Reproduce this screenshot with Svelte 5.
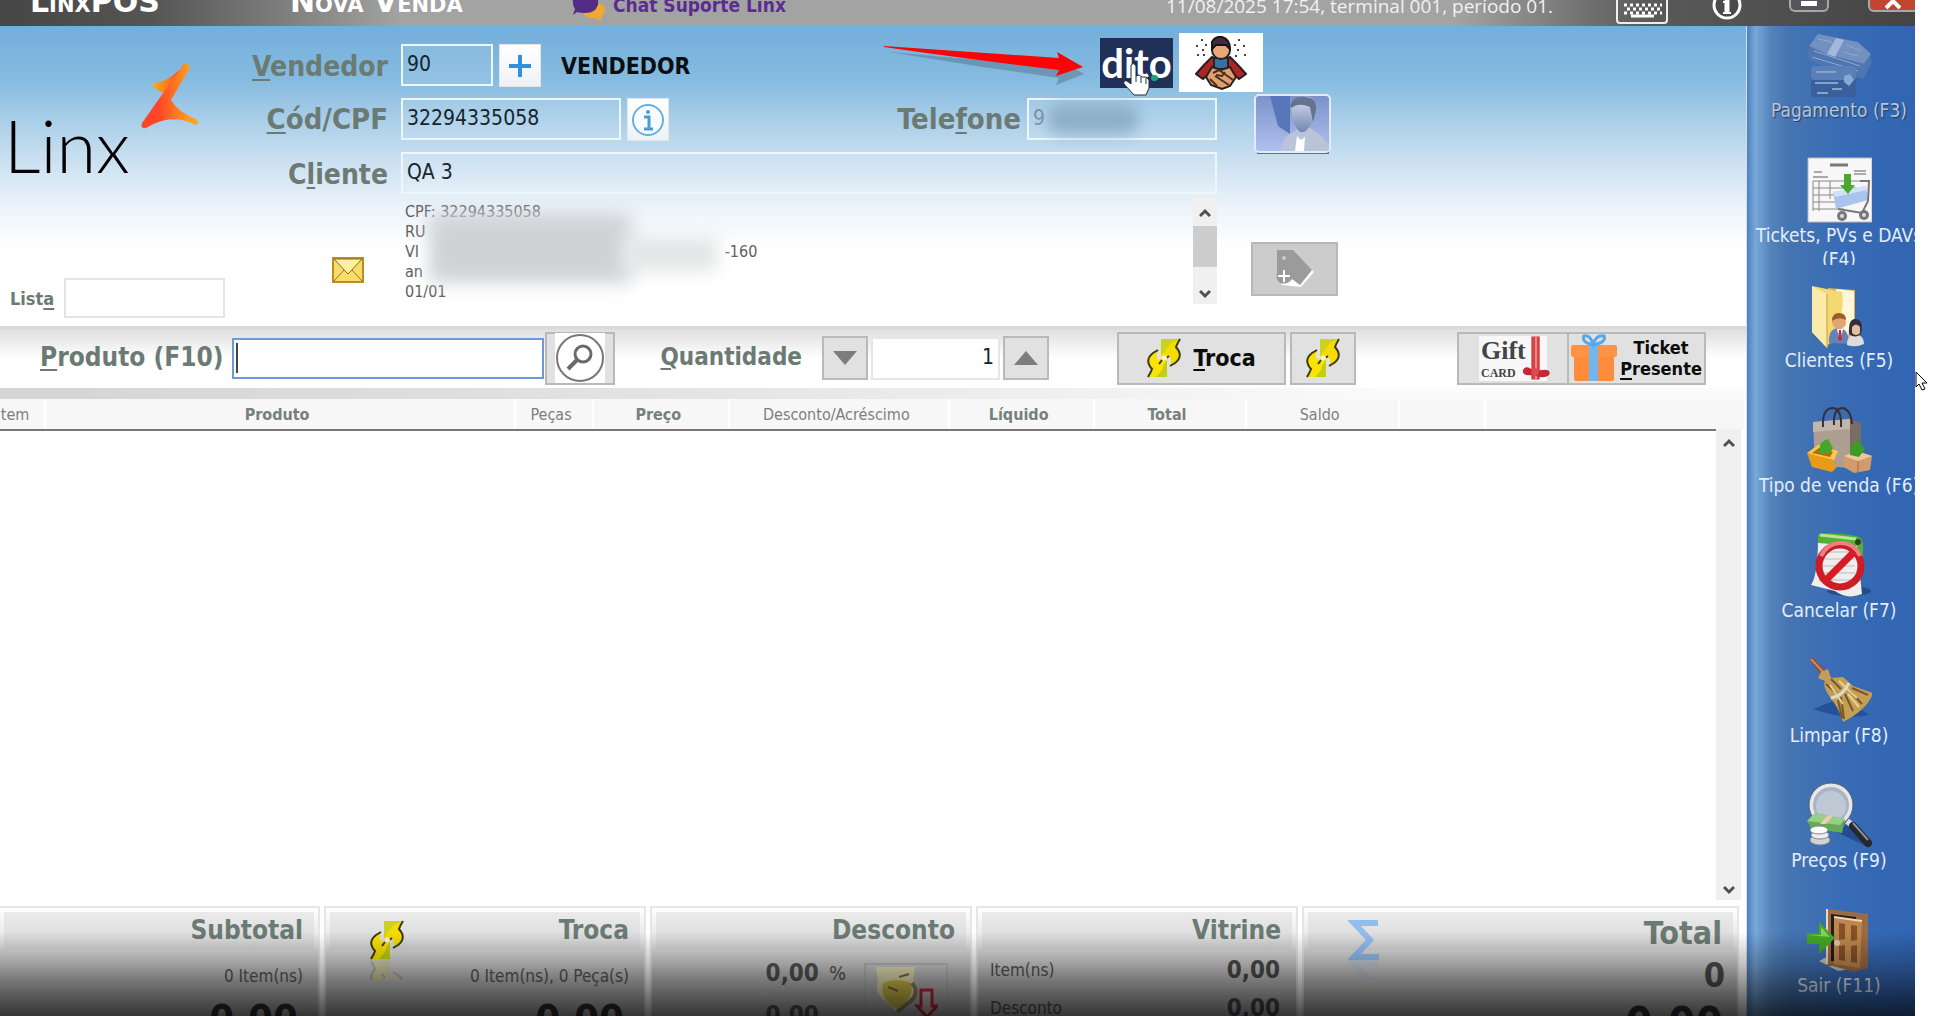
<script>
  let vendedor = $state('90');
  let codigo = $state('32294335058');
  let cliente = $state('QA 3');
  let telefone = $state('9');
  let lista = $state('');
  let produto = $state('');
  let quantidade = $state('1');

  const columns = [
    { name: 'Item', width: 2.6, bold: false },
    { name: 'Produto', width: 26.9, bold: true },
    { name: 'Peças', width: 4.5, bold: false },
    { name: 'Preço', width: 7.8, bold: true },
    { name: 'Desconto/Acréscimo', width: 12.6, bold: false },
    { name: 'Líquido', width: 8.3, bold: true },
    { name: 'Total', width: 8.7, bold: true },
    { name: 'Saldo', width: 8.8, bold: false },
    { name: '', width: 4.9, bold: false },
    { name: '', width: 14.9, bold: false }
  ];

  const actions = [
    { label: 'Pagamento (F3)', icon: 'pay', disabled: true },
    { label: 'Tickets, PVs e DAVs (F4)', icon: 'tickets' },
    { label: 'Clientes (F5)', icon: 'clients' },
    { label: 'Tipo de venda (F6)', icon: 'saletype' },
    { label: 'Cancelar (F7)', icon: 'cancel' },
    { label: 'Limpar (F8)', icon: 'broom' },
    { label: 'Preços (F9)', icon: 'prices' },
    { label: 'Sair (F11)', icon: 'exit' }
  ];
</script>

{#snippet swap()}
  <svg class="swap" viewBox="0 0 34 40" aria-hidden="true">
    <path d="M14 1H33Q30 6 29 9Q37 18 28 25L23 28Q26 22 22 18L15 23L14 22Z" fill="#f6dc00" />
    <path d="M14 1H33L24 5L17 14L14 17Z" fill="#cdd21c" />
    <path d="M33 1Q30 6 29 9Q37 18 28 25L23 28M22 18L15 23" fill="none" stroke="#3c3a10" stroke-width="2" />
    <path d="M20 39H1Q4 34 5 31Q-3 22 6 15L11 12Q8 18 12 22L19 17L20 18Z" fill="#fae300" />
    <path d="M20 39H9L15 32L17 26L20 22Z" fill="#c3cf14" />
    <path d="M1 39Q4 34 5 31Q-3 22 6 15L11 12M12 26L15 22" fill="none" stroke="#3c3a10" stroke-width="2" />
    <path d="M14 19L18 17L20 21L16 23Z" fill="#f4f4ee" />
  </svg>
{/snippet}

{#snippet sigma()}
  <svg width="32" height="40" viewBox="0 0 32 40" aria-hidden="true">
    <path d="M30 3H6L22 20L6 37H31" fill="none" stroke="#93bdf0" stroke-width="6" />
  </svg>
{/snippet}

{#snippet chevron(down)}
  <svg width="12" height="10" viewBox="0 0 12 10" aria-hidden="true">
    <path d={down ? 'M1 2L6 7L11 2' : 'M1 8L6 3L11 8'} fill="none" stroke="#505050" stroke-width="3" />
  </svg>
{/snippet}

{#snippet actionIcon(name)}
  <svg class="action-icon" viewBox="0 0 66 66" aria-hidden="true">
    {#if name === 'pay'}
      <path d="M12 8L52 18L66 30L57 47L14 33L1 26Z" fill="#5078b2" />
      <path d="M12 2L52 10L65 22L58 32L20 22L3 14Z" fill="#7391c0" />
      <path d="M3 14L20 22L58 32L65 22L64 34L57 46L14 33L1 26Z" fill="#4f76b0" />
      <path d="M30 6L38 8L29 25L21 22Z" fill="#a3b9db" />
      <path d="M12 7L26 10M40 13L56 19M38 20L52 24M8 19L54 34M6 25L52 39" stroke="#8eaad1" stroke-width="1" />
      <rect x="5" y="34" width="45" height="31" rx="3" fill="#3b5f9b" />
      <rect x="5" y="34" width="45" height="14" rx="3" fill="#5b80b7" />
      <path d="M10 40H30M9 51H32M26 57H36M11 61H22" stroke="#86a3ce" stroke-width="2" />
      <path d="M38 44L44 42L48 48L43 54L38 50Z" fill="#8aa8d4" />
    {:else if name === 'tickets'}
      <path d="M2 1H66V65H2Z" fill="#f7f7f7" stroke="#bbb" />
      <path d="M24 8H42" stroke="#777" stroke-width="3" />
      <path d="M8 15H16M7 20H22M48 14H60M48 17H60" stroke="#aaa" stroke-width="2" />
      <path d="M7 24H62M7 31H50M7 38H45M7 45H36M7 52H38M7 24V54M13 24V54M24 24V42" stroke="#888" stroke-width="1" />
      <path d="M27 35L60 29L62 43L30 52Z" fill="#a9c4ee" />
      <path d="M27 35L60 29L61 33L29 40Z" fill="#d3e2fa" />
      <path d="M54 24H63L62 44L56 56L32 52" fill="none" stroke="#777" stroke-width="2" />
      <path d="M38 17H45V28H49L42 37L34 28H38Z" fill="#4aa82c" />
      <circle cx="36" cy="59" r="5" fill="#777" /><circle cx="58" cy="58" r="5" fill="#777" />
      <circle cx="36" cy="59" r="2" fill="#ddd" /><circle cx="58" cy="58" r="2" fill="#ddd" />
    {:else if name === 'clients'}
      <path d="M22 6L49 8V56L22 62Z" fill="#d9b341" />
      <path d="M30 7L48 9V50L30 58Z" fill="#fff7d8" />
      <path d="M6 4L36 10Q39 30 30 44L21 66L6 50Z" fill="#f4d872" />
      <path d="M6 4L21 12V66L6 50Z" fill="#f9eba9" />
      <path d="M21 12V66" stroke="#c39c31" stroke-width="1" />
      <path d="M23 61Q22 47 32 46Q43 46 43 62Z" fill="#6382b7" />
      <path d="M31 47L34 61L37 47Z" fill="#fff" /><path d="M33 48H35L36 57L34 60L32 57Z" fill="#b9303a" />
      <circle cx="33" cy="40" r="7" fill="#e4a66e" /><path d="M26 39Q26 31 33 31Q40 31 40 38Q33 34 26 39Z" fill="#9b5d25" />
      <path d="M41 63Q41 53 49 52Q58 53 58 62Q49 66 41 63Z" fill="#ddd" />
      <path d="M43 52Q42 36 50 37Q58 38 55 52Q49 57 43 52Z" fill="#30313c" />
      <path d="M46 45Q50 40 54 45V51Q50 55 46 51Z" fill="#e7be9b" />
    {:else if name === 'saletype'}
      <path d="M7 15L44 12V61L9 58Z" fill="#ae9e92" />
      <path d="M44 12L55 16V58L44 61Z" fill="#796c64" />
      <path d="M7 15L44 12V22L7 25Z" fill="#c2b5aa" />
      <path d="M17 20Q16 1 27 1Q36 2 35 20M28 18Q27 1 37 1Q45 3 46 17" fill="none" stroke="#382f35" stroke-width="2" />
      <path d="M1 46L24 50L31 60L26 65L6 60Z" fill="#e89b18" />
      <path d="M1 46L12 38L32 44L28 53Z" fill="#ffc843" />
      <path d="M6 46L13 41L27 45L24 50Z" fill="#b86a0e" />
      <path d="M38 49L49 43L66 49L64 63L48 66L38 60Z" fill="#d19b6c" />
      <path d="M38 49L52 54L66 49L50 44Z" fill="#efc59f" />
      <path d="M52 54V65" stroke="#a26c40" stroke-width="1" />
      <path d="M13 44Q14 33 22 32L27 41L24 47H14Z" fill="#46a629" />
      <path d="M44 48Q43 37 52 33L59 42L53 50Z" fill="#3c9c26" />
    {:else if name === 'cancel'}
      <ellipse cx="43" cy="59" rx="22" ry="5" fill="#1c3f7b" opacity="0.7" />
      <path d="M12 6H50L56 62Q41 68 29 59L5 53Q12 43 12 6Z" fill="#eee" />
      <path d="M15 20H48M15 27H49M15 34H49M14 41H49M13 48H50" stroke="#bbb" />
      <path d="M12 2Q30 0 50 4Q58 5 57 18V42L54 43L51 14L12 11Z" fill="#55af37" />
      <path d="M14 3L50 7" stroke="#b7e691" stroke-width="3" /><circle cx="52" cy="10" r="3" fill="#26451e" />
      <circle cx="34" cy="34" r="21" fill="none" stroke="#ce1c26" stroke-width="7" />
      <path d="M20 48L48 20" stroke="#d61d26" stroke-width="7" />
      <path d="M15 24Q22 10 36 11Q49 12 54 24" fill="none" stroke="#ec8082" stroke-width="4" />
    {:else if name === 'broom'}
      <path d="M7 52Q37 63 63 58L38 40Z" fill="#24529a" />
      <path d="M3 2L7 0L22 16L17 21Z" fill="#8b513d" /><path d="M5 2L19 17" stroke="#c28d70" stroke-width="2" />
      <path d="M15 15L22 12L25 21L37 20L47 29L67 36Q62 52 37 65Q32 49 25 42Q16 29 19 24L12 21Z" fill="#c49e55" />
      <path d="M25 22L35 32M20 27L31 37M46 31L62 38M43 33L56 47M39 37L47 54M35 40L38 62M32 43L36 61" stroke="#79572a" stroke-width="2" />
      <path d="M24 28L37 47M33 24L51 41M42 37L53 50" stroke="#ecd18e" stroke-width="2" />
      <path d="M25 41Q37 39 43 26" fill="none" stroke="#d9d9cc" stroke-width="3" />
    {:else if name === 'prices'}
      <path d="M30 50L60 64L65 61L40 43Z" fill="#244d8f" />
      <circle cx="25" cy="23" r="20" fill="#a9b5c6" stroke="#e5e7ea" stroke-width="4" />
      <circle cx="25" cy="23" r="22" fill="none" stroke="#5b6168" stroke-width="1" />
      <circle cx="25" cy="24" r="15" fill="#c9d1dc" opacity="0.7" />
      <path d="M41 39L47 44" stroke="#ddd" stroke-width="6" />
      <path d="M47 44L62 61" stroke="#26282b" stroke-width="8" stroke-linecap="round" />
      <path d="M47 41L62 58" stroke="#89909a" stroke-width="2" />
      <path d="M1 39L9 31L39 37L36 51L5 46Z" fill="#66aa58" />
      <path d="M1 39L9 31L39 37L34 43Z" fill="#98cf86" />
      <path d="M22 33L27 34L20 42H14Z" fill="#edcdb1" />
      <ellipse cx="14" cy="58" rx="10" ry="5" fill="#d1d3d5" stroke="#83898e" />
      <ellipse cx="14" cy="53" rx="9" ry="4" fill="#edeeee" stroke="#83898e" />
      <ellipse cx="13" cy="48" rx="9" ry="4" fill="#fff" stroke="#83898e" />
    {:else}
      <path d="M13 54L25 48L45 62L32 64Z" fill="#c2c4c9" />
      <path d="M21 2L62 7V61L48 65L27 59H21Z" fill="#9b6b45" />
      <path d="M25 7L50 10V56L25 54Z" fill="#241b1c" />
      <path d="M28 10L56 14L54 61L28 57Z" fill="#bc864e" />
      <path d="M28 10L56 14M21 2V57" stroke="#efd8b9" stroke-width="2" fill="none" />
      <path d="M33 16L39 17V32L33 33ZM45 18L51 19V33L45 34ZM33 39L39 38V54L33 53ZM45 39L51 38V56L45 55Z" fill="#875025" />
      <circle cx="31" cy="36" r="3" fill="#dbc8a5" />
      <path d="M1 26H13V15L29 31L13 47V37H1Z" fill="#43a823" /><path d="M2 28H15V20L24 30Z" fill="#86cf63" />
    {/if}
  </svg>
{/snippet}

<div class="app">
  <header class="titlebar">
    <strong class="brand">LinxPOS</strong>
    <h1>Nova Venda</h1>
    <a class="chat" href="#chat">
      <svg width="34" height="28" viewBox="0 0 34 28" aria-hidden="true">
        <path d="M22 10Q33 10 33 17Q33 21 29 23L30 28L23 25Q15 26 12 21Z" fill="#f0a833" />
        <path d="M14 0H22Q27 4 26 12Q23 20 14 20Q8 20 5 19L1 22L3 16Q0 12 1 5Z" fill="#532d85" />
      </svg>
      <span>Chat Suporte Linx</span>
    </a>
    <span class="status">11/08/2025 17:54, terminal 001, período 01.</span>
    <button class="keyboard" aria-label="Teclado">
      <svg width="52" height="26" viewBox="0 0 52 26">
        <rect x="1" y="-3" width="50" height="26" rx="3" fill="none" stroke="#eee" stroke-width="2" />
        <path d="M8 5H46M11 9H46M8 13H46" stroke="#fff" stroke-width="3" stroke-dasharray="3 3" />
        <path d="M15 16H38" stroke="#fff" stroke-width="3" />
      </svg>
    </button>
    <button class="about" aria-label="Informações">
      <svg width="32" height="26" viewBox="0 0 32 26">
        <circle cx="16" cy="5" r="13" fill="#4b4b4b" stroke="#fff" stroke-width="3" />
        <path d="M16 0V14" stroke="#fff" stroke-width="5" /><path d="M12 2H16M12 13H20" stroke="#fff" stroke-width="2" />
      </svg>
    </button>
    <button class="window minimize" aria-label="Minimizar"><i></i></button>
    <button class="window close" aria-label="Fechar">
      <svg width="20" height="10" viewBox="0 0 20 10"><path d="M3 8L10 1L17 8" fill="none" stroke="#fff" stroke-width="4" /></svg>
    </button>
  </header>

  <div class="body">
    <main>
      <section class="sale-header">
        <div class="left">
          <div class="logo">
            <span>Linx</span>
            <svg width="60" height="68" viewBox="0 0 60 68" aria-hidden="true">
              <defs>
                <linearGradient id="flame" x1="0" x2="1"><stop offset="0.3" stop-color="#ff4527" /><stop offset="0.9" stop-color="#ffa51e" /></linearGradient>
                <linearGradient id="ember" x1="0" x2="1"><stop offset="0" stop-color="#ffae17" /><stop offset="1" stop-color="#f75220" /></linearGradient>
              </defs>
              <path d="M13 24Q11 21 16 21Q28 19 39 8L31 35Q19 30 13 24Z" fill="url(#ember)" />
              <path d="M43 3Q46 0 49 3Q50 5 48 9L31 38Q38 50 56 57Q60 61 56 63Q31 50 6 66Q0 67 2 61Z" fill="url(#flame)" />
            </svg>
          </div>
          <label class="lista"><span>List<u>a</u></span><input bind:value={lista} /></label>
        </div>

        <div class="form">
          <div class="row">
            <label class="caption" for="vendedor"><u>V</u>endedor</label>
            <div class="fields seller">
              <input id="vendedor" bind:value={vendedor} />
              <button class="square" aria-label="Adicionar vendedor">
                <svg width="24" height="24" viewBox="0 0 24 24"><path d="M12 1V23M1 12H23" stroke="#3190dc" stroke-width="4" /></svg>
              </button>
              <strong>VENDEDOR</strong>
            </div>
            <button class="dito">
              <span>dito</span><i></i>
            </button>
            <button class="deal" aria-label="Negociação">
              <svg width="52" height="54" viewBox="0 0 52 54">
                <path d="M6 4H8M10 9H12M1 10H3M7 14H9M2 19H4M8 19H10M43 4H45M39 9H41M48 10H50M42 14H44M49 19H51M40 20H42" stroke="#444" stroke-width="2" />
                <path d="M17 21L26 25L35 21L42 28L51 38L44 43L35 35H17L8 43L1 38L9 29Z" fill="#ae2523" stroke="#222" stroke-width="2" />
                <path d="M19 22H33V33H19Z" fill="#3472a3" stroke="#222" stroke-width="2" />
                <circle cx="26" cy="14" r="9" fill="#e9a878" stroke="#28212c" stroke-width="2" />
                <path d="M17 13V6Q20 0 27 1Q35 3 35 13L31 9H21Z" fill="#452d37" stroke="#17131b" stroke-width="2" />
                <path d="M17 31L26 34L35 31L41 41L35 50L27 53L16 49L11 41Z" fill="#dfa070" stroke="#2b2119" stroke-width="2" />
                <path d="M18 37L24 34L38 44M20 40L34 49M15 43L22 50M21 39L27 40L30 36" fill="none" stroke="#4e3021" stroke-width="2" />
              </svg>
            </button>
          </div>

          <div class="row">
            <label class="caption wide-caption" for="codigo"><u>C</u>ód/CPF</label>
            <div class="fields">
              <input id="codigo" bind:value={codigo} />
              <button class="square" aria-label="Dados do cliente">
                <svg width="34" height="34" viewBox="0 0 34 34"><circle cx="17" cy="17" r="15" fill="#f7fbfe" stroke="#6ab0df" stroke-width="2" /><path d="M13 14H18V26M13 26H22" fill="none" stroke="#499cd6" stroke-width="3" /><circle cx="17" cy="9" r="2" fill="#499cd6" /></svg>
              </button>
              <label class="caption wide-caption phone" for="telefone">Tele<u>f</u>one</label>
              <span class="masked"><input id="telefone" bind:value={telefone} /><i></i></span>
            </div>
            <button class="photo" aria-label="Foto do cliente">
              <svg viewBox="0 0 78 60">
                <defs>
                  <linearGradient id="sky" x1="0" x2="0" y1="0" y2="1"><stop offset="0" stop-color="#7c92c7" /><stop offset="1" stop-color="#afc0ee" /></linearGradient>
                  <linearGradient id="skin" x1="0" x2="0" y1="0" y2="1"><stop offset="0" stop-color="#d9dfef" /><stop offset="1" stop-color="#7386b4" /></linearGradient>
                </defs>
                <path d="M3 59H75" stroke="#5470a8" stroke-width="2" />
                <rect x="1" y="1" width="75" height="57" rx="4" fill="url(#sky)" stroke="#e4eafb" stroke-width="2" />
                <path d="M16 2H36V40L24 32Z" fill="#5876ba" />
                <path d="M27 57Q28 42 40 38L45 33H55L60 37Q72 42 75 57Z" fill="#bbc3d9" />
                <path d="M41 57L43 42L47 46L51 43L50 57Z" fill="#fff" />
                <path d="M37 11Q44 1 55 3Q63 6 60 22Q57 34 50 38H46Q38 32 37 11Z" fill="url(#skin)" />
                <path d="M36 12Q38 2 50 3Q63 3 62 16L59 28L56 13Q44 8 38 14Z" fill="#66728e" />
              </svg>
            </button>
          </div>

          <div class="row">
            <label class="caption" for="cliente">C<u>l</u>iente</label>
            <div class="fields"><input id="cliente" bind:value={cliente} /></div>
          </div>

          <div class="row details">
            <button class="mail" aria-label="Enviar e-mail">
              <svg width="32" height="26" viewBox="0 0 32 26">
                <rect x="1" y="1" width="30" height="24" fill="#f8dc6c" stroke="#bd8d20" stroke-width="2" />
                <path d="M2 2L16 17L30 2Z" fill="#fdf0a3" stroke="#8f6a16" /><path d="M2 24L12 13M30 24L20 13" stroke="#9b7118" />
              </svg>
            </button>
            <div class="memo">
              <div class="lines">
                <p>CPF: 32294335058</p>
                <p>RU</p>
                <p>VI <span>-160</span></p>
                <p>an</p>
                <p>01/01</p>
                <i class="veil wide"></i><i class="veil narrow"></i>
              </div>
              <div class="scroll small">{@render chevron(false)}<i></i>{@render chevron(true)}</div>
            </div>
            <button class="tag" aria-label="Adicionar etiqueta">
              <svg width="42" height="40" viewBox="0 0 42 40">
                <path d="M5 3H19L40 23L27 38L8 36L2 26L5 22Z" fill="#fff" />
                <path d="M3 1H19L38 21L26 36L18 30Q14 36 6 34Q1 30 3 22Z" fill="#9b9b9b" />
                <circle cx="10" cy="9" r="2" fill="#ccc" /><path d="M10 21V33M4 27H16" stroke="#fff" stroke-width="2" />
              </svg>
            </button>
          </div>
        </div>
      </section>

      <section class="product">
        <label class="caption" for="produto"><u>P</u>roduto (F10)</label>
        <span class="entry"><input id="produto" bind:value={produto} /><i></i></span>
        <button class="tool search" aria-label="Pesquisar">
          <svg width="50" height="50" viewBox="0 0 50 50"><rect width="50" height="50" fill="#fff" /><circle cx="25" cy="25" r="23" fill="#fff" stroke="#777" stroke-width="2" /><circle cx="28" cy="21" r="8" fill="none" stroke="#6a6a6a" stroke-width="3" /><path d="M22 27L13 36" stroke="#6a6a6a" stroke-width="4" /></svg>
        </button>
        <label class="caption amount" for="quantidade"><u>Q</u>uantidade</label>
        <button class="tool step" aria-label="Diminuir"><svg width="24" height="14" viewBox="0 0 24 14"><path d="M0 0H24L12 14Z" fill="#7d7d7d" /></svg></button>
        <input id="quantidade" class="qty" bind:value={quantidade} />
        <button class="tool step" aria-label="Aumentar"><svg width="24" height="14" viewBox="0 0 24 14"><path d="M0 14H24L12 0Z" fill="#7d7d7d" /></svg></button>
        <button class="tool exchange">{@render swap()}<span><u>T</u>roca</span></button>
        <button class="tool quick" aria-label="Troca rápida">{@render swap()}</button>
        <button class="tool gift">
          <span class="card"><b>Gift</b><small>CARD</small></span>
          <svg width="30" height="46" viewBox="0 0 32 46" aria-hidden="true"><path d="M11 0H20V46H11Z" fill="#d3444a" /><path d="M15 0H17V46H15Z" fill="#ee8a8b" /><path d="M14 37Q5 29 2 36Q1 43 14 41Q24 46 30 41Q33 34 20 36Z" fill="#c62931" /><circle cx="15" cy="38" r="4" fill="#e1494f" /></svg>
        </button>
        <button class="tool ticket">
          <svg width="46" height="48" viewBox="0 0 46 48" aria-hidden="true"><path d="M3 20H43V45Q43 47 41 47H5Q3 47 3 45Z" fill="#ff8b3d" /><rect y="11" width="46" height="12" rx="2" fill="#ff9345" /><path d="M18 11H27V47H18Z" fill="#72b6f0" /><path d="M22 11Q10 8 13 2Q19 0 22 10Q26 0 33 2Q36 8 22 11" fill="none" stroke="#58a8e9" stroke-width="3" /></svg>
          <span>Ticket<br /><u>P</u>resente</span>
        </button>
      </section>

      <section class="items">
        <div class="strip"></div>
        <table>
          <colgroup>{#each columns as column}<col style:width="{column.width}%" />{/each}</colgroup>
          <thead>
            <tr>{#each columns as column}<th scope="col" class:bold={column.bold}>{column.name}</th>{/each}</tr>
          </thead>
          <tbody></tbody>
        </table>
        <div class="list"><div class="scroll">{@render chevron(false)}{@render chevron(true)}</div></div>
      </section>

      <section class="totals">
        <article>
          <h2>Subtotal</h2>
          <p>0 Item(ns)</p>
          <strong class="big">0,00</strong>
        </article>
        <article>
          <h2><span class="mirror">{@render swap()}<span class="reflection">{@render swap()}</span></span>Troca</h2>
          <p>0 Item(ns), 0 Peça(s)</p>
          <strong class="big">0,00</strong>
        </article>
        <article class="discount">
          <h2>Desconto</h2>
          <div class="split">
            <div class="numbers"><strong>0,00</strong><span>%</span><strong>0,00</strong></div>
            <button aria-label="Aplicar desconto">
              <svg width="64" height="54" viewBox="0 0 64 54"><path d="M2 2H41L39 15Q47 28 35 38L23 48L15 39Q-1 29 4 16Z" fill="#efe8b5" /><path d="M9 18Q22 12 37 18Q41 32 23 44Q5 35 9 18Z" fill="#d8c64a" /><path d="M38 18Q47 29 34 38L23 47" fill="none" stroke="#8a8768" stroke-width="4" /><path d="M25 12L35 9M14 22L24 26" stroke="#77734d" stroke-width="2" /><path d="M47 25H58V41H63L53 52L43 41H47Z" fill="#d8c7c7" stroke="#c32d35" stroke-width="3" /></svg>
            </button>
          </div>
        </article>
        <article class="vitrine">
          <h2>Vitrine</h2>
          <dl><dt>Item(ns)</dt><dd>0,00</dd><dt>Desconto</dt><dd>0,00</dd></dl>
        </article>
        <article class="total">
          <h2><span class="mirror">{@render sigma()}<span class="reflection">{@render sigma()}</span></span>Total</h2>
          <strong class="count">0</strong>
          <strong class="big">0,00</strong>
        </article>
      </section>
    </main>

    <nav>
      {#each actions as action}
        <button class:off={action.disabled}>{@render actionIcon(action.icon)}<span>{action.label}</span></button>
      {/each}
    </nav>
  </div>

  <div class="shade"></div>
  <svg class="pointer" width="206" height="48" viewBox="0 0 206 48" aria-hidden="true">
    <path d="M2 9L172 24L170 16L197 31L169 42L172 35L96 24Z" fill="#456" opacity="0.35" transform="translate(3 5)" />
    <path d="M0 8L175 20L173 14L199 29L172 38L175 32Q90 22 0 9Z" fill="#f90505" />
  </svg>
  <svg class="hand" width="32" height="36" viewBox="0 0 32 36" aria-hidden="true">
    <path d="M9 3Q12 0 14 4V14L17 13L20 15L24 15L27 18V26L24 33H12L2 22Q1 18 5 19L9 22Z" fill="#fff" stroke="#222b44" stroke-width="1" /><path d="M14 14V20M19 15V21M24 16V22" stroke="#26304b" />
  </svg>
  <svg class="cursor" width="14" height="21" viewBox="0 0 14 21" aria-hidden="true"><path d="M1 1V16L4 13L7 19L10 18L7 12H12Z" fill="#fff" stroke="#000" /></svg>
</div>

<style>
  :global(body) { margin: 0; background: #fff; }
  .app, .app * { box-sizing: border-box; }
  .app {
    position: relative;
    display: flex;
    flex-direction: column;
    height: 100vh;
    padding-right: 37px;
    overflow: hidden;
    color: #6b7a73;
    font-family: "DejaVu Sans Condensed", "Noto Sans", sans-serif;
    font-size: 16px;
  }
  svg { display: block; flex: none; }
  h1, h2, p, dl, dd { margin: 0; }
  u { text-decoration-thickness: 2px; text-underline-offset: 3px; }
  button { display: flex; align-items: center; justify-content: center; padding: 0; border: 0; background: none; color: inherit; font: inherit; }
  input { min-width: 0; border: 2px solid #eef6fc; outline: none; background: transparent; color: #16242e; font: inherit; font-size: 21px; padding: 0 4px 2px; }

  .titlebar { flex: none; display: flex; align-items: flex-start; height: 26px; padding-left: 30px; overflow: hidden; color: #fff; background: linear-gradient(90deg, #464646 0, #555 8%, #a3a3a3 21%, #a3a3a3 76%, #5a5a5a 86%, #444 100%); }
  .brand, h1 { flex: none; font-family: "DejaVu Sans", sans-serif; font-size: 30px; font-weight: 700; line-height: 28px; font-variant: small-caps; margin-top: -12px; white-space: nowrap; }
  .brand { width: 260px; }
  h1 { width: 282px; }
  .chat { display: flex; gap: 7px; width: 594px; color: #5b2d91; font-size: 19px; font-weight: 700; line-height: 24px; text-decoration: none; }
  .chat svg { margin-top: -7px; }
  .chat span { margin-top: -7px; }
  .status { flex: 1; margin-top: -7px; color: #f1f1f1; font-family: "Open Sans", sans-serif; font-size: 19px; line-height: 26px; white-space: nowrap; }
  .keyboard { margin-right: 43px; }
  .about { margin-right: 46px; }
  .window { width: 40px; height: 12px; border: 2px solid #a8a8a8; border-top: 0; border-radius: 0 0 6px 6px; background: #555560; }
  .minimize { margin-right: 39px; }
  .minimize i { width: 16px; height: 5px; background: #fff; margin-bottom: 4px; }
  .close { width: 47px; background: #c2452f; border-right: 0; border-radius: 0 0 0 6px; }

  .body { flex: 1; min-height: 0; display: flex; }
  main { flex: 1; min-width: 0; display: flex; flex-direction: column; border-right: 1px solid #dcdcdc; }

  .sale-header { flex: none; display: flex; height: 300px; padding-top: 18px; background: linear-gradient(#73afdb 0, #86bbe0 18%, #b0d2ea 34%, #d4e5f3 49%, #ebf3fa 60%, #fff 74%); }
  .left { flex: none; width: 240px; display: flex; flex-direction: column; justify-content: space-between; padding: 18px 0 8px 4px; }
  .logo { display: flex; align-items: flex-start; color: #000; }
  .logo span { width: 136px; margin-top: 43px; font-family: Lato, sans-serif; font-size: 72px; font-weight: 300; line-height: 80px; }
  .lista { display: flex; align-items: center; gap: 6px; padding-left: 6px; font-size: 18px; font-weight: 700; }
  .lista span { width: 48px; }
  .lista input { width: 161px; height: 40px; border-color: #e4e4e4; background: #fff; }

  .form { flex: 1; display: flex; flex-direction: column; gap: 12px; }
  .row { flex: none; display: flex; height: 42px; }
  .caption { flex: none; width: 148px; margin-right: 13px; font-size: 28px; font-weight: 700; line-height: 46px; text-align: right; }
  .wide-caption { font-size: 29px; line-height: 42px; }
  .fields { display: flex; width: 816px; }
  .fields input { height: 42px; width: 100%; background: rgba(255, 255, 255, 0.1); }
  #vendedor { width: 92px; }
  #codigo { width: 220px; }
  .seller { width: 699px; }
  .seller strong { margin-left: 20px; color: #0b0f12; font-size: 23px; line-height: 44px; }
  .square { flex: none; width: 42px; height: 43px; margin-left: 6px; border: 1px solid #e0e6ea; background: linear-gradient(#fff, #eef1f4); }
  .phone { flex: 1; width: auto; margin-right: 6px; }
  .masked { position: relative; flex: none; width: 190px; }
  .masked input { color: #7d8f9d; }
  .masked i { position: absolute; left: 20px; top: 6px; width: 92px; height: 30px; border-radius: 14px; background: #8fb0c8; filter: blur(7px); }
  .dito { position: relative; width: 73px; height: 50px; margin-top: -6px; background: #213058; color: #fff; font-family: Lato, sans-serif; font-size: 40px; font-weight: 700; line-height: 50px; }
  .dito i { position: absolute; left: 51px; bottom: 7px; width: 7px; height: 6px; border-radius: 3px; background: #19a974; }
  .deal { width: 84px; height: 59px; margin: -11px 0 0 6px; background: #fff; }
  .photo { width: 78px; height: 60px; margin: -4px 0 0 37px; }
  .photo svg { width: 78px; height: 60px; }
  .details { height: 107px; margin-top: -7px; }
  .mail { width: 148px; height: 26px; margin: 58px 13px 0 0; justify-content: flex-end; padding-right: 24px; }
  .memo { display: flex; width: 816px; height: 105px; }
  .lines { position: relative; flex: 1; padding: 3px 4px; overflow: hidden; color: #606060; font-size: 16px; line-height: 20px; }
  .lines p { white-space: pre; }
  .lines span { margin-left: 301px; }
  .veil { position: absolute; filter: blur(9px); background: #cfd3d6; }
  .wide { left: 28px; top: 14px; width: 202px; height: 70px; }
  .narrow { left: 220px; top: 38px; width: 96px; height: 34px; background: #e4e5e6; }
  .scroll { flex: none; display: flex; flex-direction: column; align-items: center; justify-content: space-between; width: 25px; padding: 9px 0 5px; background: #f0f0f0; }
  .small { width: 24px; }
  .small i { width: 24px; height: 41px; margin-bottom: 14px; background: #cdcdcd; }
  .tag { width: 87px; height: 54px; margin: 43px 0 0 34px; border: 2px solid #b8b8b8; background: #ccc; }

  .product { flex: none; display: flex; align-items: center; height: 62px; padding: 0 40px 1px 40px; border-top: 3px solid #d9d9d9; background: linear-gradient(#dedede, #fff 50%); white-space: nowrap; }
  .product .caption { width: auto; margin-right: 9px; font-size: 26px; line-height: 40px; padding-bottom: 2px; }
  .entry { position: relative; display: flex; width: 312px; }
  .entry input { width: 100%; height: 41px; border-color: #6a9bd8; background: #fff; }
  .entry i { position: absolute; left: 4px; top: 5px; width: 2px; height: 30px; background: #444; }
  .tool { flex: none; height: 53px; border: 2px solid #b9b9b9; background: #e1e1e1; color: #0c0c0c; font-weight: 700; }
  .search { width: 70px; margin-left: 1px; }
  .product .amount { margin: 0 20px 0 45px; font-size: 24px; }
  .step { width: 46px; height: 44px; }
  .qty { width: 129px; height: 43px; margin: 0 3px; border-color: #e6e6e6; background: #fff; text-align: right; }
  .exchange { width: 169px; margin-left: 68px; gap: 12px; font-size: 23px; }
  .quick { width: 66px; margin-left: 4px; }
  .swap { width: 34px; height: 40px; }
  .gift { width: 110px; margin-left: auto; padding-left: 6px; border-right: 0; background: linear-gradient(#f7f7f7, #f7f7f7) 20px 2px / 68px 45px no-repeat #e1e1e1; }
  .card { display: flex; flex-direction: column; width: 40px; color: #444; font-family: "Liberation Serif", serif; text-align: left; }
  .card b { font-size: 26px; font-weight: 700; line-height: 30px; }
  .card small { font-size: 12px; line-height: 14px; }
  .ticket { width: 139px; gap: 3px; font-size: 18px; line-height: 21px; }

  .items { flex: 1; min-height: 0; display: flex; flex-direction: column; }
  .strip { flex: none; height: 11px; background: linear-gradient(90deg, #d4d4d4, #e4e4e4 40%, #fbfbfb 80%); }
  table { flex: none; width: 100%; border-collapse: collapse; table-layout: fixed; background: #f7f7f7; }
  th { height: 30px; padding: 0 6px 0 0; border-right: 2px solid #fff; font-size: 16px; font-weight: 400; color: #77817c; text-align: center; white-space: nowrap; }
  th:first-child { direction: rtl; padding-right: 15px; }
  .bold { font-weight: 700; }
  .list { flex: 1; min-height: 0; display: flex; justify-content: flex-end; padding-right: 5px; background: linear-gradient(#777, #777) 0 0 / calc(100% - 30px) 2px no-repeat #fff; }

  .totals { flex: none; display: flex; gap: 4px; height: 116px; margin-left: -2px; padding: 6px 7px 0 0; }
  article { flex: 1 1 322px; display: flex; flex-direction: column; height: 160px; padding: 4px; border: 2px solid #e6e6e6; background: linear-gradient(#fff 0, #e6e6e6 20%, #c4c4c4 45%, #b4b4b4); }
  .total { flex: 1 1 437px; }
  h2 { position: relative; display: flex; justify-content: flex-end; height: 38px; padding-right: 11px; background: linear-gradient(#ebebeb, #d6d6d6); font-size: 26px; font-weight: 700; line-height: 36px; }
  article p { padding-right: 11px; margin-top: 14px; color: #585858; font-size: 17px; line-height: 24px; text-align: right; }
  .big { padding-right: 16px; margin-top: 8px; color: #333; font-size: 40px; line-height: 48px; text-align: right; }
  .mirror { position: absolute; left: 40px; top: 8px; }
  .reflection { display: block; height: 20px; overflow: hidden; opacity: 0.2; }
  .reflection :global(svg) { transform: scaleY(-1); }
  .split { display: flex; justify-content: flex-end; padding-right: 18px; gap: 18px; }
  .numbers { display: grid; grid-template-columns: auto auto; column-gap: 10px; align-items: center; color: #555; align-content: start; padding-top: 2px; }
  .numbers strong { font-size: 24px; line-height: 42px; }
  .numbers span { font-size: 20px; }
  .split button { width: 84px; height: 62px; margin-top: 13px; border: 2px solid #bbb; align-items: flex-start; }
  dl { display: grid; grid-template-columns: 1fr auto; padding: 1px 12px 0 8px; color: #555; line-height: 38px; }
  dt { font-size: 17px; }
  dd { font-size: 24px; font-weight: 700; color: #4c4c4c; }
  .total h2 { font-size: 32px; line-height: 42px; }
  .count { padding-right: 8px; color: #4d4d4d; font-size: 34px; line-height: 50px; text-align: right; }
  .total .big { margin-top: 0; padding-right: 10px; font-size: 44px; }

  nav { flex: none; display: flex; flex-direction: column; width: 168px; overflow: hidden; background: linear-gradient(90deg, #4c82c4 0, #78a7d8 5%, #5584bb 14%, #4674b1 25%, #386cb5 55%, #3164b2 100%); }
  nav button { flex: none; flex-direction: column; justify-content: flex-start; width: 184px; height: 125px; padding: 6px 3px 0; color: #e3edf9; font-size: 19px; line-height: 24px; }
  nav span { max-height: 42px; overflow: hidden; }
  nav .off { color: #b7c5da; text-shadow: 1px 1px 1px #223a63; }
  .action-icon { width: 66px; height: 66px; }

  .shade { position: absolute; left: 0; right: 37px; bottom: 0; height: 84px; background: linear-gradient(transparent, rgba(0, 0, 0, 0.25) 40%, rgba(0, 0, 0, 0.72)); pointer-events: none; }
  .pointer { position: absolute; left: 884px; top: 38px; pointer-events: none; }
  .hand { position: absolute; left: 1122px; top: 62px; pointer-events: none; }
  .cursor { position: absolute; right: 23px; top: 371px; pointer-events: none; }
</style>
